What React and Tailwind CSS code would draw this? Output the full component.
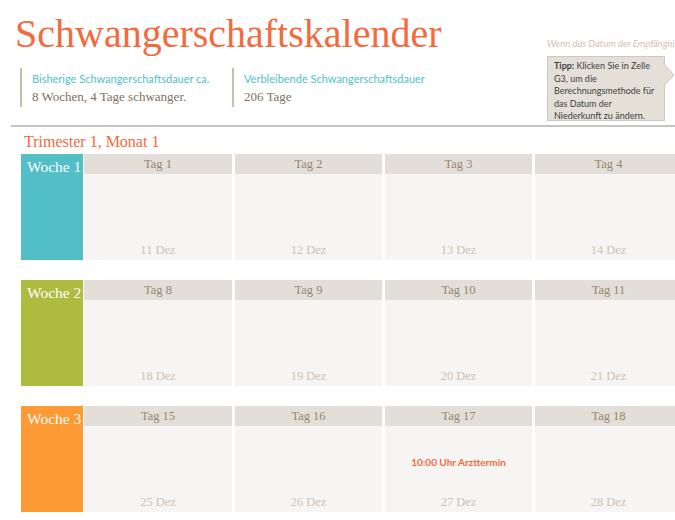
const weeks = [
  { label: 'Woche 1', color: 'bg-[#52bec5]', days: [['Tag 1', '11 Dez'], ['Tag 2', '12 Dez'], ['Tag 3', '13 Dez'], ['Tag 4', '14 Dez']] },
  { label: 'Woche 2', color: 'bg-[#adbb3e]', days: [['Tag 8', '18 Dez'], ['Tag 9', '19 Dez'], ['Tag 10', '20 Dez'], ['Tag 11', '21 Dez']] },
  { label: 'Woche 3', color: 'bg-[#fe9a34]', days: [['Tag 15', '25 Dez'], ['Tag 16', '26 Dez'], ['Tag 17', '27 Dez', '10:00 Uhr Arzttermin'], ['Tag 18', '28 Dez']] },
];

const serif = "font-['Liberation_Serif',serif]";
const sans = "font-['Lato','Liberation_Sans',sans-serif]";

function WeekRow({ week }) {
  return (
    <div className="flex h-[106px] ml-[21px]">
      <div className={`w-[62px] shrink-0 ${week.color} pt-[1px] pl-[6px] text-[15.5px] text-white ${serif}`}>
        {week.label}
      </div>
      <div className="flex gap-[3px] ml-[1px]">
        {week.days.map(([tag, datum, note], i) => (
          <div key={tag} className={`${i === 0 ? 'w-[148px]' : 'w-[147px]'} shrink-0 flex flex-col bg-[#f7f5f3]`}>
            <div className={`h-[20px] bg-[#e3dfd8] flex items-center justify-center text-[12.5px] text-[#968671] ${serif}`}>
              {tag}
            </div>
            <div className="flex-1 flex items-center justify-center pt-[4px]">
              {note && <span className={`text-[10px] font-bold text-[#f36b3b] ${sans}`}>{note}</span>}
            </div>
            <div className={`h-[17px] text-center text-[12.5px] leading-[14px] text-[#cdc2b5] ${serif}`}>{datum}</div>
          </div>
        ))}
      </div>
    </div>
  );
}

export default function App() {
  return (
    <div className="w-[675px] h-[520px] overflow-hidden bg-white relative">
      <div className="flex">
        <div className="w-[530px] shrink-0">
          <h1 className={`pl-[15px] pt-[12px] h-[58px] text-[40px] leading-[44px] text-[#f26a3d] ${serif}`}>
            Schwangerschaftskalender
          </h1>
          <div className="flex mt-[10px] ml-[20px]">
            <div className="w-[212px] border-l-2 border-[#cbbca9] pl-[10px] h-[39px]">
              <div className={`text-[11px] leading-[13px] pt-[4px] text-[#4fbfc8] ${sans}`}>Bisherige Schwangerschaftsdauer ca.</div>
              <div className={`text-[13px] leading-[15px] mt-[4px] text-[#7e7162] ${serif}`}>8 Wochen, 4 Tage schwanger.</div>
            </div>
            <div className="border-l-2 border-[#cbbca9] pl-[10px] h-[39px]">
              <div className={`text-[11px] leading-[13px] pt-[4px] text-[#4fbfc8] ${sans}`}>Verbleibende Schwangerschaftsdauer</div>
              <div className={`text-[13px] leading-[15px] mt-[4px] text-[#7e7162] ${serif}`}>206 Tage</div>
            </div>
          </div>
        </div>
        <div className="pt-[38px] pl-[17px] whitespace-nowrap">
          <div className={`text-[9.5px] italic text-[#d4bfac] leading-[12px] ${sans}`}>
            Wenn das Datum der Empfängnis bekannt ist
          </div>
          <div className="relative mt-[6px] w-[118px] h-[65px] bg-[#e4dfd7] border border-[#cfc8bd] pl-[6px] pr-[2px] pt-[3px] whitespace-normal">
            <p className={`text-[9px] leading-[12.5px] text-[#3f3f3f] ${sans}`}>
              <b>Tipp:</b> Klicken Sie in Zelle<br />G3, um die<br />Berechnungsmethode für<br />das Datum der<br />Niederkunft zu ändern.
            </p>
            <svg className="absolute top-[6px] right-[-11px]" width="12" height="24" viewBox="0 0 12 24">
              <path d="M0 0 L11 12 L0 24 Z" fill="#e4dfd7" stroke="#cfc8bd" strokeWidth="1" />
              <path d="M0 1 L0 23" stroke="#e4dfd7" strokeWidth="2" />
            </svg>
          </div>
        </div>
      </div>
      <div className="ml-[11px] mt-[4px] h-[2px] bg-[#c4c4c4]" />
      <div className={`pl-[24px] pt-[5px] h-[27px] text-[16px] leading-[20px] text-[#f26a3d] ${serif}`}>
        Trimester 1, Monat 1
      </div>
      <div className="flex flex-col gap-[20px]">
        {weeks.map((w) => (
          <WeekRow key={w.label} week={w} />
        ))}
      </div>
    </div>
  );
}
